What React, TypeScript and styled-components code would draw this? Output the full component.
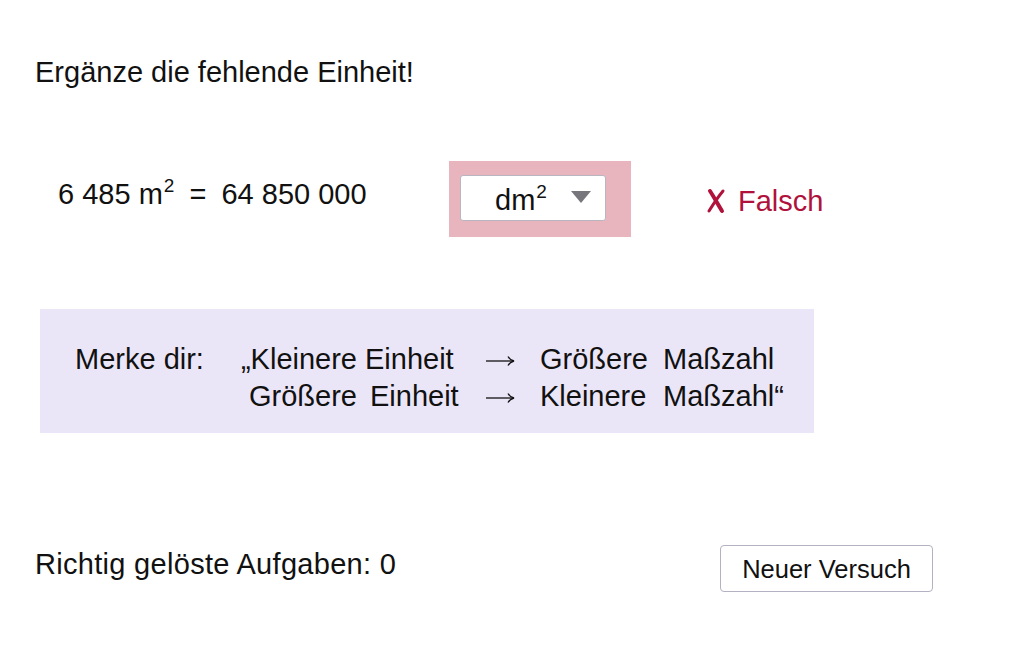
import React from "react";
import styled, { createGlobalStyle } from "styled-components";

const Global = createGlobalStyle`
  html, body { margin: 0; padding: 0; background: #ffffff; }
  body {
    font-family: "Liberation Sans", Arial, sans-serif;
    color: #111;
    width: 1032px;
    height: 645px;
    overflow: hidden;
  }
`;

const Page = styled.main`
  display: flex;
  flex-direction: column;
  padding: 55px 0 0 35px;
`;

const Title = styled.div`
  font-size: 29px;
  line-height: 34px;
`;

const TaskRow = styled.div`
  display: flex;
  align-items: flex-start;
  margin-top: 72px;
  height: 76px;
`;

const Equation = styled.div`
  width: 414px;
  box-sizing: border-box;
  padding-left: 23px;
  margin-top: 16px;
  font-size: 29px;
  line-height: 34px;
  white-space: pre;
`;

const Sup = styled.sup`
  font-size: 19px;
  line-height: 0;
  vertical-align: 0;
  position: relative;
  top: -12px;
  margin-left: 1px;
`;

const Rel = styled.span`
  margin: 0 7px;
`;

const Answer = styled.div<{ $state: "wrong" | "right" | "none" }>`
  width: 182px;
  height: 76px;
  box-sizing: border-box;
  padding: 14px 0 0 11px;
  background: ${(p) =>
    p.$state === "wrong" ? "#e8b4bd" : p.$state === "right" ? "#b8e0bd" : "transparent"};
`;

const Select = styled.div`
  width: 146px;
  height: 46px;
  box-sizing: border-box;
  border: 1px solid #b9b6c0;
  border-radius: 3px;
  background: #fff;
  display: flex;
  align-items: center;
  padding-left: 34px;
  gap: 24px;
  font-size: 29px;
`;

const SelectValue = styled.span`
  line-height: 34px;
  margin-top: 4px;
`;

const Caret = styled.svg`
  width: 20px;
  height: 12px;
  margin-top: -2px;
`;

const Feedback = styled.div`
  margin-left: 75px;
  margin-top: 23px;
  font-size: 29px;
  line-height: 34px;
  color: #b0123c;
  display: flex;
  align-items: center;
  gap: 12px;
`;

const Cross = styled.svg`
  width: 20px;
  height: 26px;
`;

const Memo = styled.div`
  margin: 72px 0 0 5px;
  width: 774px;
  height: 124px;
  box-sizing: border-box;
  background: #ebe6f7;
  padding: 32px 0 0 35px;
  display: grid;
  grid-template-columns: 165px 117px 127px 31px 123px auto;
  grid-auto-rows: 37px;
  font-size: 29px;
  line-height: 37px;
`;

const Cell = styled.span<{ $align?: "left" | "right" | "center"; $pad?: number }>`
  text-align: ${(p) => p.$align ?? "left"};
  padding-left: ${(p) => p.$pad ?? 0}px;
  white-space: pre;
`;

const Arrow = styled.span`
  display: flex;
  align-items: center;
  justify-content: center;
  padding-top: 3px;
`;

const BottomRow = styled.div`
  display: flex;
  justify-content: space-between;
  align-items: flex-start;
  width: 898px;
  margin-top: 112px;
`;

const Score = styled.div`
  font-size: 29px;
  line-height: 34px;
  letter-spacing: 0.3px;
  margin-top: 2px;
`;

const Button = styled.button`
  width: 213px;
  height: 47px;
  box-sizing: border-box;
  background: #fff;
  border: 1px solid #b3b1c2;
  border-radius: 4px;
  font-family: "Liberation Sans", Arial, sans-serif;
  font-size: 25.5px;
  color: #111;
  padding: 0;
  display: flex;
  align-items: center;
  justify-content: center;
  padding-top: 2px;
  cursor: pointer;
`;

const RightArrow = () => (
  <svg width="30" height="12" viewBox="0 0 30 12">
    <path d="M1 6 H28" stroke="#111" strokeWidth="1.3" fill="none" />
    <path d="M23 1.5 Q25 5 29 6 Q25 7 23 10.5" stroke="#111" strokeWidth="1.3" fill="none" />
  </svg>
);

export default function App() {
  return (
    <>
      <Global />
      <Page>
        <Title>Ergänze die fehlende Einheit!</Title>
        <TaskRow>
          <Equation>
            6 485 m<Sup>2</Sup>
            <Rel> = </Rel>64 850 000
          </Equation>
          <Answer $state="wrong">
            <Select>
              <SelectValue>
                dm<Sup>2</Sup>
              </SelectValue>
              <Caret viewBox="0 0 20 12">
                <path d="M0 0 H20 L10 12 Z" fill="#77767c" />
              </Caret>
            </Select>
          </Answer>
          <Feedback>
            <Cross viewBox="0 0 20 26">
              <path d="M4 3 C8 9 11 15 16 23" stroke="#b0123c" strokeWidth="4" fill="none" strokeLinecap="round" />
              <path d="M17 3 C12 9 8 15 3 23" stroke="#b0123c" strokeWidth="3" fill="none" strokeLinecap="round" />
            </Cross>
            Falsch
          </Feedback>
        </TaskRow>
        <Memo>
          <Cell>Merke dir:</Cell>
          <Cell $align="right">„Kleinere</Cell>
          <Cell $pad={8}>Einheit</Cell>
          <Arrow><RightArrow /></Arrow>
          <Cell $pad={25}>Größere</Cell>
          <Cell $pad={25}>Maßzahl</Cell>
          <Cell />
          <Cell $align="right">Größere</Cell>
          <Cell $pad={13}>Einheit</Cell>
          <Arrow><RightArrow /></Arrow>
          <Cell $pad={25}>Kleinere</Cell>
          <Cell $pad={25}>Maßzahl“</Cell>
        </Memo>
        <BottomRow>
          <Score>Richtig gelöste Aufgaben: 0</Score>
          <Button>Neuer Versuch</Button>
        </BottomRow>
      </Page>
    </>
  );
}
